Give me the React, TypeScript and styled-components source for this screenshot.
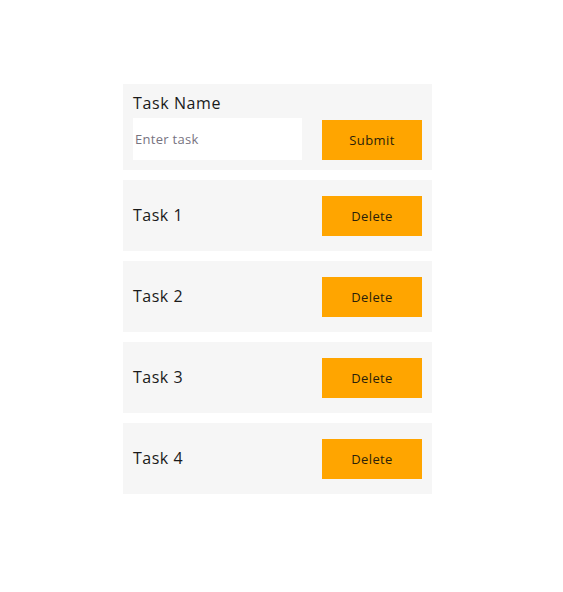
import React from "react";
import styled, { createGlobalStyle } from "styled-components";

const Global = createGlobalStyle`
  body { margin: 0; background: #fff; font-family: "Open Sans", "Liberation Sans", sans-serif; color: #1a1a1a; }
`;

const Page = styled.div`
  padding: 84px 0 0 123px;
`;

const List = styled.div`
  width: 309px;
  display: flex;
  flex-direction: column;
  gap: 10px;
`;

const FormCard = styled.form`
  background: #f6f6f6;
  padding: 9px 10px 10px;
  display: flex;
  flex-direction: column;
  gap: 5px;
`;

const Label = styled.label`
  font-size: 16px;
  line-height: 20px;
  letter-spacing: 0.6px;
`;

const FormRow = styled.div`
  display: flex;
  align-items: center;
  justify-content: space-between;
`;

const Input = styled.input`
  width: 169px;
  height: 42px;
  box-sizing: border-box;
  border: none;
  background: #fff;
  padding: 0 2px;
  font-family: inherit;
  font-size: 13px;
  letter-spacing: 0.3px;
  outline: none;
  &::placeholder { color: #77737f; }
`;

const Button = styled.button<{ $offset?: number }>`
  width: 100px;
  height: 40px;
  border: none;
  background: #ffa500;
  color: #2a1f0a;
  font-family: inherit;
  font-size: 13px;
  letter-spacing: 0.4px;
  cursor: pointer;
  margin-top: ${(p) => p.$offset ?? 0}px;
`;

const TaskCard = styled.div`
  background: #f6f6f6;
  height: 71px;
  box-sizing: border-box;
  padding: 0 10px;
  display: flex;
  align-items: center;
  justify-content: space-between;
`;

const TaskName = styled.span`
  font-size: 16px;
  letter-spacing: 0.5px;
  margin-top: -2px;
`;

const tasks = ["Task 1", "Task 2", "Task 3", "Task 4"];

export default function App() {
  return (
    <>
      <Global />
      <Page>
        <List>
          <FormCard onSubmit={(e) => e.preventDefault()}>
            <Label>Task Name</Label>
            <FormRow>
              <Input placeholder="Enter task" />
              <Button type="submit" $offset={2}>Submit</Button>
            </FormRow>
          </FormCard>
          {tasks.map((t) => (
            <TaskCard key={t}>
              <TaskName>{t}</TaskName>
              <Button type="button" $offset={1}>Delete</Button>
            </TaskCard>
          ))}
        </List>
      </Page>
    </>
  );
}
